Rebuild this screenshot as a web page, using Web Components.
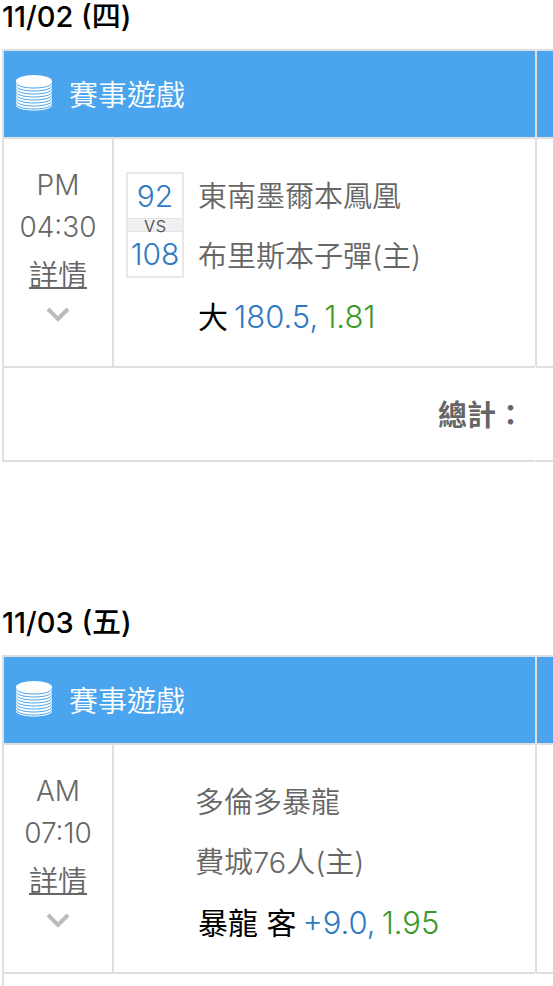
<!DOCTYPE html>
<html lang="zh-Hant">
<head>
<meta charset="utf-8">
<meta name="viewport" content="width=device-width, initial-scale=1">
<title>賽事遊戲</title>
<style>
  body {
    margin: 0;
    background: #fff;
    color: #666;
    font-family: Inter, "Noto Sans CJK TC", sans-serif;
    font-size: 29px;
    font-weight: 350;
    overflow-x: hidden;
  }
</style>
</head>
<body>

<bet-day date="11/02 (四)">
  <match-time slot="time" period="PM" time="04:30"></match-time>
  <match-bet slot="match" away="東南墨爾本鳳凰" home="布里斯本子彈(主)" away-score="92" home-score="108" pick="大" line="180.5," odds="1.81"></match-bet>
  <span slot="total">總計：</span>
</bet-day>

<bet-day date="11/03 (五)">
  <match-time slot="time" period="AM" time="07:10"></match-time>
  <match-bet slot="match" away="多倫多暴龍" home="費城76人(主)" pick="暴龍 客" line="+9.0," odds="1.95"></match-bet>
</bet-day>

<template id="coin-stack">
  <style>
    :host {
      display: block;
      width: 36px;
      height: 36px;
    }

    svg {
      display: block;
    }
  </style>
  <svg width="36" height="36" viewBox="0 0 36 36" aria-hidden="true">
    <path d="M0 6v24c0 3.300 8 5.500 18 5.500s18-2.200 18-5.500V6z" fill="#fff"/>
    <ellipse cx="18" cy="6" rx="18" ry="6" fill="#fff"/>
    <g fill="none" stroke="#4aa4ee" stroke-width="1">
      <path d="M0 7.500c0 3.300 8 5.500 18 5.500s18-2.200 18-5.500"/>
      <path d="M0 10.500c0 3.300 8 5.500 18 5.500s18-2.200 18-5.500"/>
      <path d="M0 13.500c0 3.300 8 5.500 18 5.500s18-2.200 18-5.500"/>
      <path d="M0 16.500c0 3.300 8 5.500 18 5.500s18-2.200 18-5.500"/>
      <path d="M0 19.500c0 3.300 8 5.500 18 5.500s18-2.200 18-5.500"/>
      <path d="M0 22.500c0 3.300 8 5.500 18 5.500s18-2.200 18-5.500"/>
      <path d="M0 25.500c0 3.300 8 5.500 18 5.500s18-2.200 18-5.500"/>
      <path d="M0 28.500c0 3.300 8 5.500 18 5.500s18-2.200 18-5.500"/>
    </g>
  </svg>
</template>

<template id="match-time">
  <style>
    :host {
      display: flex;
      flex-direction: column;
      align-items: center;
      padding-top: 25px;
      font-size: 28px;
      line-height: 42px;
    }

    a {
      margin-top: 7px;
      color: inherit;
      font-size: 29px;
      text-decoration: underline;
      text-decoration-thickness: 2px;
      text-underline-offset: 1px;
    }

    button {
      margin-top: 6px;
      padding: 4px;
      border: 0;
      background: none;
    }

    svg {
      display: block;
    }
  </style>
  <span id="period"></span>
  <time></time>
  <a href="#">詳情</a>
  <button type="button" aria-label="展開">
    <svg width="24" height="16" viewBox="0 0 24 16">
      <path d="M2 2l10 10L22 2" fill="none" stroke="#bbb" stroke-width="4"/>
    </svg>
  </button>
</template>

<template id="match-score">
  <style>
    :host {
      display: block;
      box-sizing: border-box;
      width: 58px;
      border: 2px solid #e8e8e8;
      color: #2f79c3;
      font-size: 30px;
      text-align: center;
    }

    div {
      line-height: 44px;
    }

    .vs {
      border: solid #e4e4e4;
      border-width: 1px 0;
      background: #f0f0f0;
      color: #555;
      font-size: 21px;
      line-height: 12px;
    }
  </style>
  <div id="away"></div>
  <div class="vs">vs</div>
  <div id="home"></div>
</template>

<template id="match-bet">
  <style>
    :host {
      display: block;
      padding: 28px 12px 19px;
      line-height: 60px;
      white-space: nowrap;
    }

    .teams {
      display: flex;
      gap: 14px;
    }

    .score {
      width: 55px;
      padding-top: 5px;
    }

    .score.played {
      width: 58px;
    }

    .bet {
      display: flex;
      gap: 6px;
      padding-left: 72px;
      color: #000;
      font-size: 31px;
    }

    #pick {
      font-size: 30px;
      font-weight: 400;
    }

    #line {
      color: #2f79c3;
    }

    #odds {
      color: #3a9a28;
    }
  </style>
  <div class="teams">
    <div class="score"></div>
    <div>
      <div id="away"></div>
      <div id="home"></div>
    </div>
  </div>
  <div class="bet">
    <span id="pick"></span>
    <span id="line"></span>
    <span id="odds"></span>
  </div>
</template>

<template id="bet-day">
  <style>
    :host {
      display: block;
    }

    :host(:not(:first-of-type)) {
      margin-top: 144px;
    }

    h2 {
      margin: 0;
      padding: 0 2px 15px;
      color: #000;
      font-size: 29px;
      font-weight: 500;
      line-height: 34px;
    }

    table {
      width: calc(100% - 2px);
      margin-left: 2px;
      table-layout: fixed;
      border-spacing: 0;
    }

    col.time {
      width: 110px;
    }

    col.rest {
      width: 18px;
    }

    th, td {
      padding: 0;
      border-top: 2px solid #dfdfdf;
      border-left: 2px solid #dfdfdf;
      vertical-align: top;
    }

    th {
      background: #4aa4ee;
      color: #fff;
      font-weight: inherit;
      text-align: left;
    }

    .title {
      display: flex;
      gap: 17px;
      padding: 4px 12px 0;
      line-height: 82px;
    }

    coin-stack {
      margin-top: 20px;
    }

    tfoot td {
      height: 92px;
      border-bottom: 2px solid #dfdfdf;
      font-weight: 600;
      line-height: 88px;
    }

    tfoot .total {
      box-sizing: border-box;
      height: 96px;
      padding: 4px 10px 0 0;
      text-align: right;
    }

    tfoot .amount {
      border-left-color: #fff;
    }
  </style>
  <h2></h2>
  <table>
    <colgroup>
      <col class="time">
      <col>
      <col class="rest">
    </colgroup>
    <thead>
      <tr>
        <th colspan="2"><div class="title"><coin-stack></coin-stack>賽事遊戲</div></th>
        <th></th>
      </tr>
    </thead>
    <tbody>
      <tr>
        <td><slot name="time"></slot></td>
        <td><slot name="match"></slot></td>
        <td></td>
      </tr>
    </tbody>
    <tfoot>
      <tr>
        <td class="total" colspan="2"><slot name="total"></slot></td>
        <td class="amount"></td>
      </tr>
    </tfoot>
  </table>
</template>

<script>
class BetElement extends HTMLElement {
  constructor() {
    super()

    this.attachShadow({ mode: 'open' })
    const template = document.getElementById(this.localName)
    this.shadowRoot.appendChild(template.content.cloneNode(true))
  }

  // Copy an attribute of the host into an element of the shadow root
  fill(selector, name) {
    this.shadowRoot.querySelector(selector).textContent = this.getAttribute(name)
  }
}

class CoinStack extends BetElement {}

class MatchTime extends BetElement {
  connectedCallback() {
    this.fill('#period', 'period')
    this.fill('time', 'time')
  }
}

class MatchScore extends BetElement {
  connectedCallback() {
    this.fill('#away', 'away')
    this.fill('#home', 'home')
  }
}

class MatchBet extends BetElement {
  connectedCallback() {
    this.fill('#away', 'away')
    this.fill('#home', 'home')
    this.fill('#pick', 'pick')
    this.fill('#line', 'line')
    this.fill('#odds', 'odds')

    // Games that have not been played yet have no score
    if (this.hasAttribute('away-score')) {
      const score = document.createElement('match-score')
      score.setAttribute('away', this.getAttribute('away-score'))
      score.setAttribute('home', this.getAttribute('home-score'))
      const box = this.shadowRoot.querySelector('.score')
      box.classList.add('played')
      box.replaceChildren(score)
    }
  }
}

class BetDay extends BetElement {
  connectedCallback() {
    this.fill('h2', 'date')
  }
}

window.customElements.define('coin-stack', CoinStack)
window.customElements.define('match-time', MatchTime)
window.customElements.define('match-score', MatchScore)
window.customElements.define('match-bet', MatchBet)
window.customElements.define('bet-day', BetDay)
</script>
</body>
</html>
